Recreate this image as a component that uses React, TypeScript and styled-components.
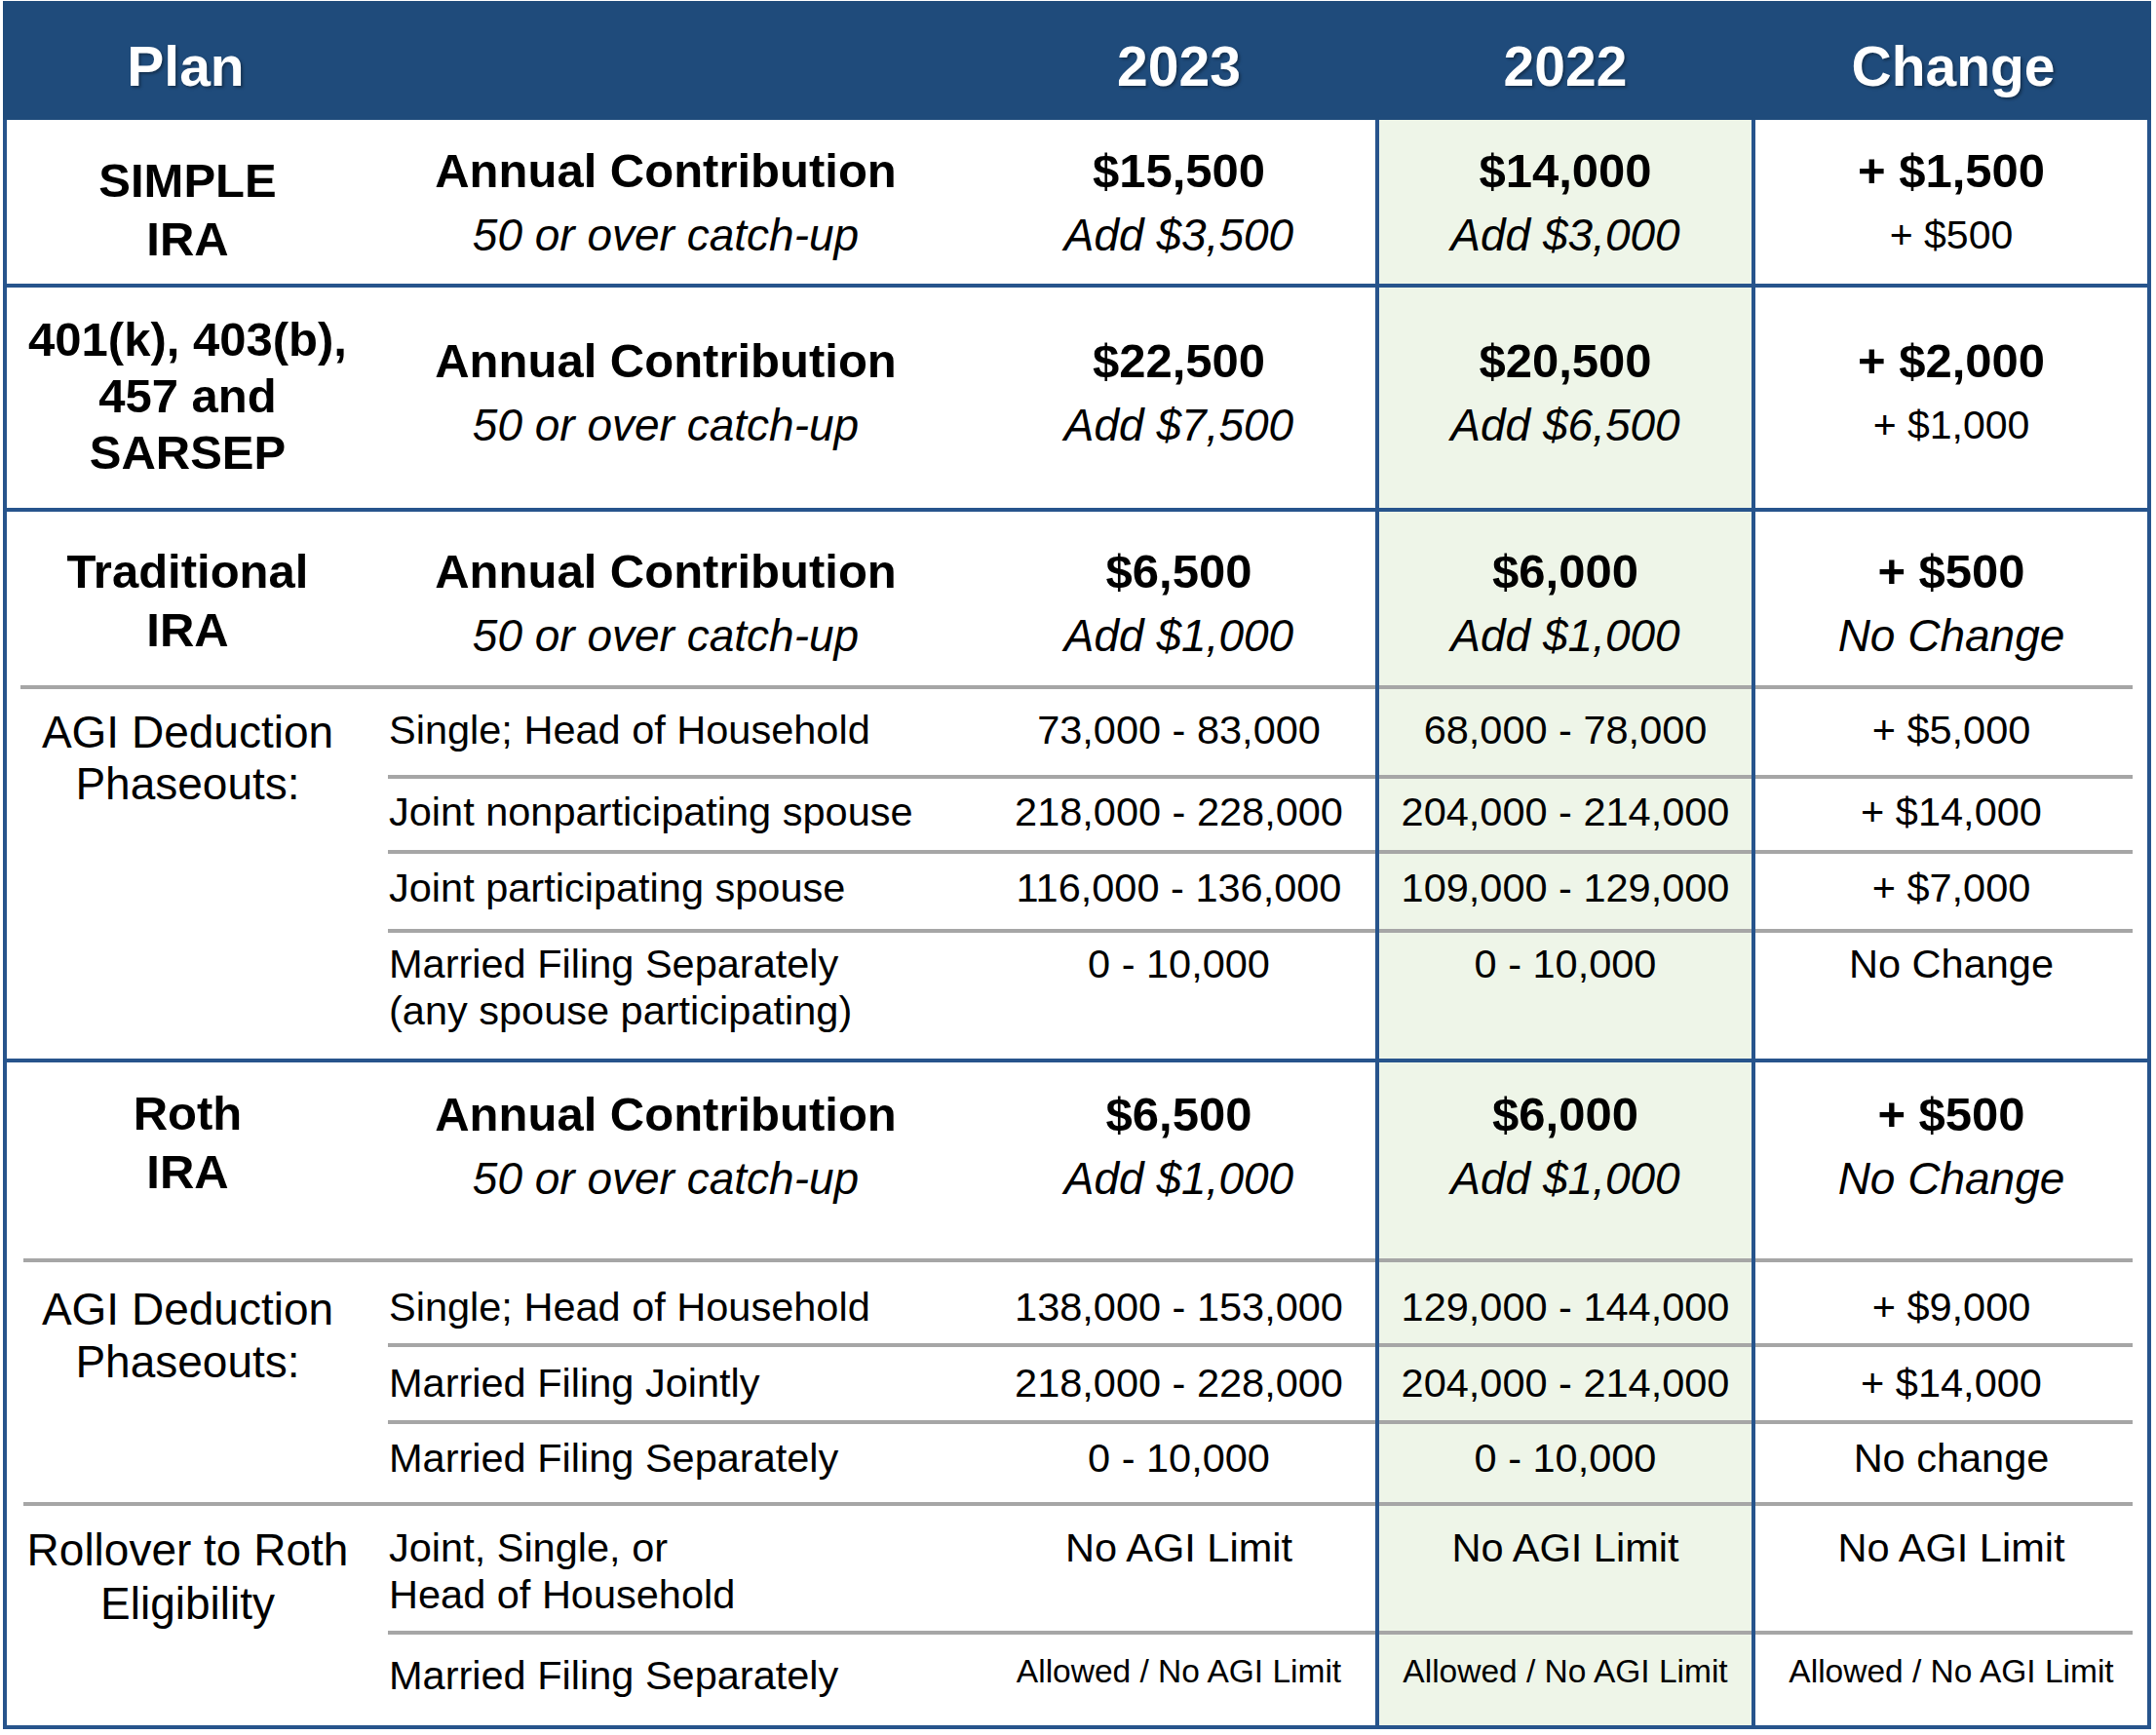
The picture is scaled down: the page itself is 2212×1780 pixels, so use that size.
import React from 'react';
import styled, { createGlobalStyle, css } from 'styled-components';

const BLUE = '#27548c';
const HEAD = '#1f4b7b';
const GREY = '#a6a6a6';
const GREEN = '#eef5e8';
const COLS = '371px 630px 403px 390px 402px';

const Global = createGlobalStyle`
  html, body { margin: 0; padding: 0; background: #ffffff; }
  body { font-family: "Liberation Sans", Arial, Helvetica, sans-serif; color: #000; }
`;

const Page = styled.div`
  width: 2212px;
  padding: 1px 0 0 3px;
  box-sizing: border-box;
`;

const Table = styled.div`
  width: 2204px;
  display: flex;
  flex-direction: column;
`;

const Header = styled.div`
  display: grid;
  grid-template-columns: 375px 630px 403px 390px 406px;
  height: 122px;
  background: ${HEAD};
`;

const HeadCell = styled.div`
  padding-top: 39px;
  text-align: center;
  color: #fff;
  font-weight: 700;
  font-size: 57px;
  line-height: 57px;
  text-shadow: 2px 2px 3px rgba(0, 0, 0, 0.35);
`;

const Section = styled.div<{ $rows: string }>`
  display: grid;
  grid-template-columns: ${COLS};
  grid-template-rows: ${(p) => p.$rows};
  border: 4px solid ${BLUE};
  border-top: none;
`;

const ruleBg = (start: number, end: number) => css`
  background-image: linear-gradient(${GREY}, ${GREY});
  background-repeat: no-repeat;
  background-position: ${start}px 0;
  background-size: calc(100% - ${start + end}px) 4px;
`;

const Cell = styled.div<{
  $pt: number;
  $hl?: boolean;
  $rule?: boolean;
  $rs?: number;
  $re?: number;
  $left?: boolean;
  $span?: number;
  $shift?: boolean;
}>`
  box-sizing: border-box;
  min-width: 0;
  padding-top: ${(p) => p.$pt}px;
  text-align: ${(p) => (p.$left ? 'left' : 'center')};
  ${(p) => p.$left && 'padding-left: 21px;'}
  ${(p) => p.$shift && 'padding-right: 20px;'}
  ${(p) => p.$span && `grid-row: span ${p.$span};`}
  background-color: ${(p) => (p.$hl ? GREEN : 'transparent')};
  ${(p) =>
    p.$hl &&
    css`
      border-left: 4px solid ${BLUE};
      border-right: 4px solid ${BLUE};
    `}
  ${(p) => p.$rule && ruleBg(p.$rs ?? 0, p.$re ?? 0)}
`;

const PlanName = styled.div<{ $lh: number }>`
  font-weight: 700;
  font-size: 49px;
  line-height: ${(p) => p.$lh}px;
`;

const Heading = styled.div`
  font-weight: 700;
  font-size: 49px;
  line-height: 66px;
  white-space: nowrap;
`;

const Italic = styled.div`
  font-style: italic;
  font-size: 46px;
  line-height: 66px;
  white-space: nowrap;
`;

const Plus = styled.div`
  font-size: 41px;
  line-height: 66px;
  white-space: nowrap;
`;

const GroupName = styled.div<{ $lh: number }>`
  font-size: 46px;
  line-height: ${(p) => p.$lh}px;
`;

const Label = styled.div`
  font-size: 41.5px;
  line-height: 48px;
  white-space: nowrap;
`;

const Small = styled.div`
  font-size: 33.5px;
  line-height: 48px;
  white-space: nowrap;
`;

type ContribProps = {
  plan: React.ReactNode;
  planLh: number;
  planPt: number;
  pt: number;
  v23: string;
  a23: string;
  v22: string;
  a22: string;
  ch: string;
  chSub: string;
  chItalic?: boolean;
};

const Contrib = ({ plan, planLh, planPt, pt, v23, a23, v22, a22, ch, chSub, chItalic }: ContribProps) => (
  <>
    <Cell $pt={planPt}>
      <PlanName $lh={planLh}>{plan}</PlanName>
    </Cell>
    <Cell $pt={pt} $shift>
      <Heading>Annual Contribution</Heading>
      <Italic>50 or over catch-up</Italic>
    </Cell>
    <Cell $pt={pt}>
      <Heading>{v23}</Heading>
      <Italic>{a23}</Italic>
    </Cell>
    <Cell $pt={pt} $hl>
      <Heading>{v22}</Heading>
      <Italic>{a22}</Italic>
    </Cell>
    <Cell $pt={pt}>
      <Heading>{ch}</Heading>
      {chItalic ? <Italic>{chSub}</Italic> : <Plus>{chSub}</Plus>}
    </Cell>
  </>
);

type SubProps = {
  label: React.ReactNode;
  v23: string;
  v22: string;
  ch: string;
  pt: number;
  first?: boolean;
  small?: boolean;
};

const SubRow = ({ label, v23, v22, ch, pt, first, small }: SubProps) => {
  const V = small ? Small : Label;
  const vpt = small ? pt - 4 : pt;
  return (
    <>
      <Cell $pt={pt} $left $rule $rs={first ? 0 : 20}>
        <Label>{label}</Label>
      </Cell>
      <Cell $pt={vpt} $rule>
        <V>{v23}</V>
      </Cell>
      <Cell $pt={vpt} $rule $hl>
        <V>{v22}</V>
      </Cell>
      <Cell $pt={vpt} $rule $re={15}>
        <V>{ch}</V>
      </Cell>
    </>
  );
};

export default function App() {
  return (
    <Page>
      <Global />
      <Table>
        <Header>
          <HeadCell>Plan</HeadCell>
          <HeadCell />
          <HeadCell>2023</HeadCell>
          <HeadCell>2022</HeadCell>
          <HeadCell>Change</HeadCell>
        </Header>

        <Section $rows="168px">
          <Contrib
            plan={<>SIMPLE<br />IRA</>}
            planLh={60}
            planPt={32}
            pt={19}
            v23="$15,500"
            a23="Add $3,500"
            v22="$14,000"
            a22="Add $3,000"
            ch="+ $1,500"
            chSub="+ $500"
          />
        </Section>

        <Section $rows="226px">
          <Contrib
            plan={<>401(k), 403(b),<br />457 and<br />SARSEP</>}
            planLh={58}
            planPt={24}
            pt={42}
            v23="$22,500"
            a23="Add $7,500"
            v22="$20,500"
            a22="Add $6,500"
            ch="+ $2,000"
            chSub="+ $1,000"
          />
        </Section>

        <Section $rows="178px 92px 77px 81px 133px">
          <Contrib
            plan={<>Traditional<br />IRA</>}
            planLh={60}
            planPt={31}
            pt={28}
            v23="$6,500"
            a23="Add $1,000"
            v22="$6,000"
            a22="Add $1,000"
            ch="+ $500"
            chSub="No Change"
            chItalic
          />
          <Cell $pt={22} $span={4} $rule $rs={14}>
            <GroupName $lh={53}>AGI Deduction<br />Phaseouts:</GroupName>
          </Cell>
          <SubRow first pt={22} label="Single; Head of Household" v23="73,000 - 83,000" v22="68,000 - 78,000" ch="+ $5,000" />
          <SubRow pt={14} label="Joint nonparticipating spouse" v23="218,000 - 228,000" v22="204,000 - 214,000" ch="+ $14,000" />
          <SubRow pt={15} label="Joint participating spouse" v23="116,000 - 136,000" v22="109,000 - 129,000" ch="+ $7,000" />
          <SubRow
            pt={12}
            label={<>Married Filing Separately<br />(any spouse participating)</>}
            v23="0 - 10,000"
            v22="0 - 10,000"
            ch="No Change"
          />
        </Section>

        <Section $rows="201px 87px 79px 84px 132px 97px">
          <Contrib
            plan={<>Roth<br />IRA</>}
            planLh={60}
            planPt={22}
            pt={20}
            v23="$6,500"
            a23="Add $1,000"
            v22="$6,000"
            a22="Add $1,000"
            ch="+ $500"
            chSub="No Change"
            chItalic
          />
          <Cell $pt={25} $span={3} $rule $rs={17}>
            <GroupName $lh={54}>AGI Deduction<br />Phaseouts:</GroupName>
          </Cell>
          <SubRow first pt={26} label="Single; Head of Household" v23="138,000 - 153,000" v22="129,000 - 144,000" ch="+ $9,000" />
          <SubRow pt={17} label="Married Filing Jointly" v23="218,000 - 228,000" v22="204,000 - 214,000" ch="+ $14,000" />
          <SubRow pt={15} label="Married Filing Separately" v23="0 - 10,000" v22="0 - 10,000" ch="No change" />
          <Cell $pt={22} $span={2} $rule $rs={17}>
            <GroupName $lh={55}>Rollover to Roth<br />Eligibility</GroupName>
          </Cell>
          <SubRow
            first
            pt={23}
            label={<>Joint, Single, or<br />Head of Household</>}
            v23="No AGI Limit"
            v22="No AGI Limit"
            ch="No AGI Limit"
          />
          <SubRow
            pt={22}
            small
            label="Married Filing Separately"
            v23="Allowed / No AGI Limit"
            v22="Allowed / No AGI Limit"
            ch="Allowed / No AGI Limit"
          />
        </Section>
      </Table>
    </Page>
  );
}
